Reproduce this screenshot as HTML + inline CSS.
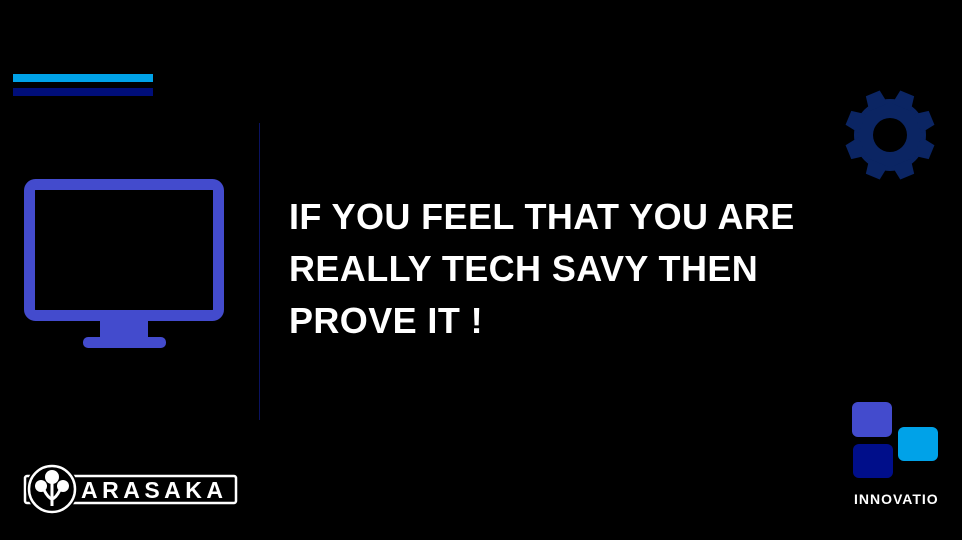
<!DOCTYPE html>
<html><head><meta charset="utf-8"><style>
html,body{margin:0;padding:0;background:#000;width:962px;height:540px;overflow:hidden;position:relative;font-family:"Liberation Sans",sans-serif}
.a{position:absolute}
.t{left:289px;top:191px;color:#fff;font-weight:bold;font-size:36px;line-height:52px;white-space:nowrap;letter-spacing:0.4px}
</style></head><body>
<div class="a" style="left:13px;top:74px;width:140px;height:8px;background:#00a2e8"></div>
<div class="a" style="left:13px;top:88px;width:140px;height:8px;background:#000e7a"></div>
<div class="a" style="left:259px;top:123px;width:1px;height:297px;background:#0a1260"></div>
<svg class="a" style="left:0;top:0" width="962" height="540">
<rect x="29.5" y="184.5" width="189" height="131" rx="6" fill="none" stroke="#434bcd" stroke-width="11"/>
<rect x="100" y="320" width="48" height="18" fill="#434bcd"/>
<rect x="83" y="337" width="83" height="11" rx="5" fill="#434bcd"/>
<g transform="translate(890,135) rotate(22.5)" fill="#0b2563">
<circle r="36"/>
<g id="th"><polygon points="-10,-30 10,-30 7.5,-45 -7.5,-45"/></g>
<use href="#th" transform="rotate(45)"/><use href="#th" transform="rotate(90)"/><use href="#th" transform="rotate(135)"/>
<use href="#th" transform="rotate(180)"/><use href="#th" transform="rotate(225)"/><use href="#th" transform="rotate(270)"/><use href="#th" transform="rotate(315)"/>
<circle r="17" fill="#000"/>
</g>
<rect x="852" y="402" width="40" height="35" rx="6" fill="#434bcd"/>
<rect x="898" y="427" width="40" height="34" rx="6" fill="#00a2e8"/>
<rect x="853" y="444" width="40" height="34" rx="6" fill="#000e8a"/>
<rect x="25" y="476" width="211" height="27" rx="2" fill="none" stroke="#fff" stroke-width="2.5"/>
<circle cx="52" cy="489" r="26" fill="#000"/>
<circle cx="52" cy="489" r="23" fill="none" stroke="#fff" stroke-width="2.5"/>
<circle cx="52" cy="477" r="7" fill="#fff"/>
<circle cx="41" cy="486" r="6" fill="#fff"/>
<circle cx="63" cy="486" r="6" fill="#fff"/>
<path d="M52 482V506M44 490Q48 498 52 499Q56 498 60 490" stroke="#fff" stroke-width="3" fill="none"/>
</svg>
<div class="a t">IF YOU FEEL THAT YOU ARE<br>REALLY TECH SAVY THEN<br>PROVE IT !</div>
<div class="a" style="left:81px;top:477px;color:#fff;font-weight:bold;font-size:23px;letter-spacing:4.5px">ARASAKA</div>
<div class="a" style="left:854px;top:491px;color:#fff;font-weight:bold;font-size:14px;letter-spacing:1px">INNOVATIO</div>
</body></html>
